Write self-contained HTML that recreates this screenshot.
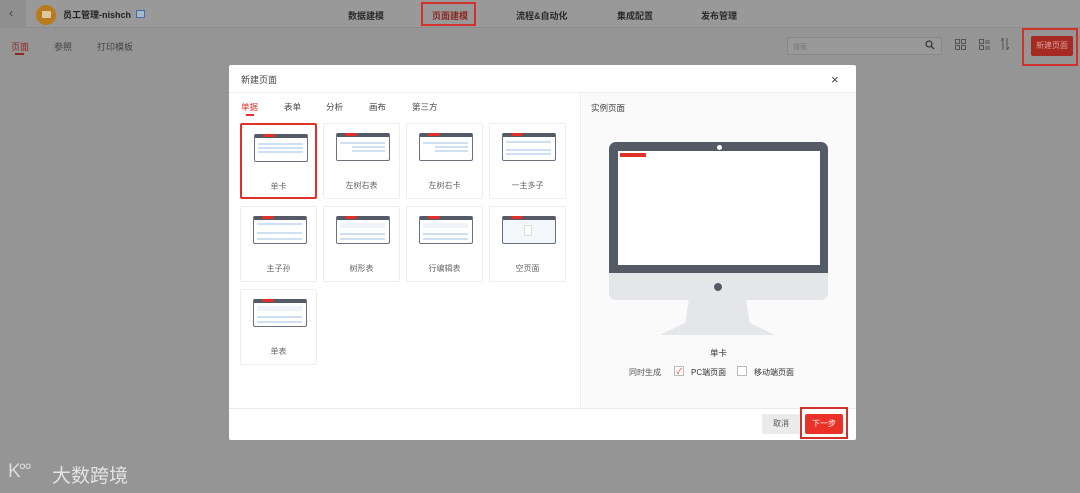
<!DOCTYPE html>
<html><head><meta charset="utf-8"><style>
*{box-sizing:border-box;margin:0;padding:0}
body{width:1080px;height:493px;overflow:hidden;background:#959595;font-family:"Liberation Sans","Noto Sans CJK SC",sans-serif;position:relative;color:#333}
.a{position:absolute}
.top{left:0;top:0;width:1080px;height:28px;background:#999;border-bottom:1px solid #8d8d8d}
.nav{top:9px;font-size:9px;font-weight:bold;color:#2a2a2a}
.modal{left:229px;top:65px;width:627px;height:375px;background:#fff;border-radius:2px}
.card{width:77px;height:76px;border:1px solid #eee;border-radius:2px;background:#fff}
.card .lb{position:absolute;left:0;right:0;top:56px;text-align:center;font-size:8px;color:#666}
.th{position:absolute;left:12px;top:9px;width:54px;height:28px;border:1.5px solid #6b7080;border-top:4px solid #555b66;border-radius:2px;background:#fff}
.th:before{content:"";position:absolute;left:8px;top:-4px;width:12px;height:3px;background:#e0302a;border-radius:2px}
.th i{position:absolute;height:1.5px;background:#cfe0f3}
.tab{top:36px;font-size:8.5px;color:#444}
</style></head><body>
<div class="a top"></div>
<div class="a" style="left:0;top:0;width:26px;height:28px;background:#8f8f8f"></div>
<div class="a" style="left:9px;top:6px;font-size:12px;color:#444">‹</div>
<div class="a" style="left:36px;top:5px;width:20px;height:20px;border-radius:50%;background:#b87a1c"></div>
<div class="a" style="left:42px;top:11px;width:9px;height:7px;background:#d9c9a0;border-radius:1px"></div>
<div class="a" style="left:63px;top:8px;font-size:9px;font-weight:bold;color:#222">员工管理-nishch</div>
<div class="a" style="left:136px;top:10px;width:9px;height:8px;border:1px solid #3d6fa8;background:#a9b8c9"></div>
<div class="a nav" style="left:348px">数据建模</div>
<div class="a nav" style="left:432px;color:#8b2a22">页面建模</div>
<div class="a" style="left:421px;top:2px;width:55px;height:24px;border:2px solid #d0312a"></div>
<div class="a nav" style="left:516px">流程&amp;自动化</div>
<div class="a nav" style="left:617px">集成配置</div>
<div class="a nav" style="left:701px">发布管理</div>
<div class="a" style="left:11px;top:40px;font-size:9px;color:#8b2a22">页面</div>
<div class="a" style="left:15px;top:53px;width:9px;height:2px;background:#8b2a22"></div>
<div class="a" style="left:54px;top:40px;font-size:9px;color:#444">参照</div>
<div class="a" style="left:97px;top:40px;font-size:9px;color:#444">打印模板</div>
<div class="a" style="left:787px;top:37px;width:155px;height:18px;border:1px solid #888;background:#999;border-radius:2px"></div>
<div class="a" style="left:793px;top:42px;font-size:7px;color:#777">搜索</div>
<svg class="a" style="left:925px;top:40px" width="10" height="10"><circle cx="4" cy="4" r="3" fill="none" stroke="#333" stroke-width="1.2"/><path d="M6.3 6.3L9 9" stroke="#333" stroke-width="1.3"/></svg>
<svg class="a" style="left:955px;top:39px" width="11" height="11" fill="none" stroke="#555"><rect x="0.5" y="0.5" width="4" height="4"/><rect x="6.5" y="0.5" width="4" height="4"/><rect x="0.5" y="6.5" width="4" height="4"/><rect x="6.5" y="6.5" width="4" height="4"/></svg>
<svg class="a" style="left:979px;top:39px" width="11" height="11" fill="none" stroke="#555"><rect x="0.5" y="0.5" width="4" height="4"/><rect x="0.5" y="6.5" width="4" height="4"/><path d="M6 2h5M6 4h5M6 8h5M6 10h5"/></svg>
<svg class="a" style="left:1001px;top:38px" width="8" height="12" fill="none" stroke="#555"><path d="M2 0v12M0 3l2-3M6 12V0M8 9l-2 3"/></svg>
<div class="a" style="left:1031px;top:36px;width:42px;height:20px;background:#a52a22;border-radius:2px;color:#d7a09b;font-size:8px;text-align:center;line-height:20px">新建页面</div>
<div class="a" style="left:1022px;top:28px;width:56px;height:38px;border:2px solid #d0312a"></div>
<div class="a" style="left:8px;top:461px;font-size:19px;color:#dcdcdc;letter-spacing:-2px">K°°</div>
<div class="a" style="left:52px;top:461px;font-size:19px;color:#e3e3e3">大数跨境</div>

<div class="a modal">
 <div class="a" style="left:12px;top:8px;font-size:9px;color:#444">新建页面</div>
 <div class="a" style="left:602px;top:7px;font-size:13px;color:#444">×</div>
 <div class="a" style="left:0;top:27px;width:627px;height:1px;background:#eee"></div>
 <div class="a" style="left:351px;top:28px;width:276px;height:315px;background:#fafafa;border-left:1px solid #eee"></div>
 <div class="a tab" style="left:12px;color:#e0302a">单据</div>
 <div class="a" style="left:17px;top:49px;width:8px;height:2px;background:#e0302a"></div>
 <div class="a tab" style="left:55px">表单</div>
 <div class="a tab" style="left:97px">分析</div>
 <div class="a tab" style="left:140px">画布</div>
 <div class="a tab" style="left:183px">第三方</div>
 <div class="a" style="left:362px;top:37px;font-size:8.5px;color:#444">实例页面</div>

 <div class="a card" style="left:11px;top:58px;border:2px solid #e0302a"><div class="th"><i style="left:3px;top:5px;width:45px"></i><i style="left:3px;top:9px;width:45px"></i><i style="left:3px;top:13px;width:45px"></i></div><div class="lb">单卡</div></div>
 <div class="a card" style="left:94px;top:58px"><div class="th"><i style="left:3px;top:5px;width:45px"></i><i style="left:15px;top:9px;width:33px"></i><i style="left:15px;top:13px;width:33px"></i></div><div class="lb">左树右表</div></div>
 <div class="a card" style="left:177px;top:58px"><div class="th"><i style="left:3px;top:5px;width:45px"></i><i style="left:15px;top:9px;width:33px"></i><i style="left:15px;top:13px;width:33px"></i></div><div class="lb">左树右卡</div></div>
 <div class="a card" style="left:260px;top:58px"><div class="th"><i style="left:3px;top:4px;width:45px"></i><i style="left:3px;top:12px;width:45px"></i><i style="left:3px;top:16px;width:45px"></i></div><div class="lb">一主多子</div></div>
 <div class="a card" style="left:11px;top:141px"><div class="th"><i style="left:3px;top:3px;width:45px"></i><i style="left:3px;top:12px;width:45px"></i><i style="left:3px;top:18px;width:45px"></i></div><div class="lb">主子孙</div></div>
 <div class="a card" style="left:94px;top:141px"><div class="th"><i style="left:3px;top:3px;width:45px;height:5px;background:#f0f4fa"></i><i style="left:3px;top:13px;width:45px"></i><i style="left:3px;top:18px;width:45px"></i></div><div class="lb">树形表</div></div>
 <div class="a card" style="left:177px;top:141px"><div class="th"><i style="left:3px;top:3px;width:45px;height:5px;background:#f0f4fa"></i><i style="left:3px;top:13px;width:45px"></i><i style="left:3px;top:18px;width:45px"></i></div><div class="lb">行编辑表</div></div>
 <div class="a card" style="left:260px;top:141px"><div class="th" style="background:#f3f6fb"><i style="left:21px;top:5px;width:8px;height:11px;background:#fff;border:1px solid #ddd"></i></div><div class="lb">空页面</div></div>
 <div class="a card" style="left:11px;top:224px"><div class="th"><i style="left:3px;top:3px;width:45px;height:5px;background:#f0f4fa"></i><i style="left:3px;top:13px;width:45px"></i><i style="left:3px;top:18px;width:45px"></i></div><div class="lb">单表</div></div>

 <div class="a" style="left:380px;top:77px;width:219px;height:132px;background:#545a66;border-radius:7px 7px 0 0"></div>
 <div class="a" style="left:488px;top:80px;width:5px;height:5px;border-radius:50%;background:#fff"></div>
 <div class="a" style="left:389px;top:86px;width:202px;height:114px;background:#fff"></div>
 <div class="a" style="left:391px;top:88px;width:26px;height:4px;background:#e0302a"></div>
 <div class="a" style="left:380px;top:208px;width:219px;height:27px;background:#e4e6ea;border-radius:0 0 7px 7px"></div>
 <div class="a" style="left:485px;top:218px;width:8px;height:8px;border-radius:50%;background:#545a66"></div>
 <div class="a" style="left:431px;top:235px;width:115px;height:35px;background:#e4e6ea;clip-path:polygon(25% 0,75% 0,78% 65%,100% 100%,0 100%,22% 65%)"></div>
 <div class="a" style="left:481px;top:282px;font-size:8.5px;color:#333">单卡</div>
 <div class="a" style="left:400px;top:302px;font-size:8px;color:#555">同时生成</div>
 <div class="a" style="left:445px;top:301px;width:10px;height:10px;border:1px solid #bbb;background:#fff;font-size:8px;color:#e0302a;line-height:9px;text-align:center">✓</div>
 <div class="a" style="left:462px;top:302px;font-size:8px;color:#333">PC端页面</div>
 <div class="a" style="left:508px;top:301px;width:10px;height:10px;border:1px solid #bbb;background:#fff"></div>
 <div class="a" style="left:525px;top:302px;font-size:8px;color:#333">移动端页面</div>

 <div class="a" style="left:0;top:343px;width:627px;height:1px;background:#eaeaea"></div>
 <div class="a" style="left:533px;top:349px;width:38px;height:20px;background:#ebebeb;border-radius:2px;font-size:8px;color:#555;text-align:center;line-height:20px">取消</div>
 <div class="a" style="left:576px;top:349px;width:38px;height:20px;background:#ea3127;border-radius:2px;font-size:8px;color:#fff;text-align:center;line-height:20px">下一步</div>
 <div class="a" style="left:571px;top:342px;width:48px;height:32px;border:2px solid #d0312a"></div>
</div>
</body></html>
